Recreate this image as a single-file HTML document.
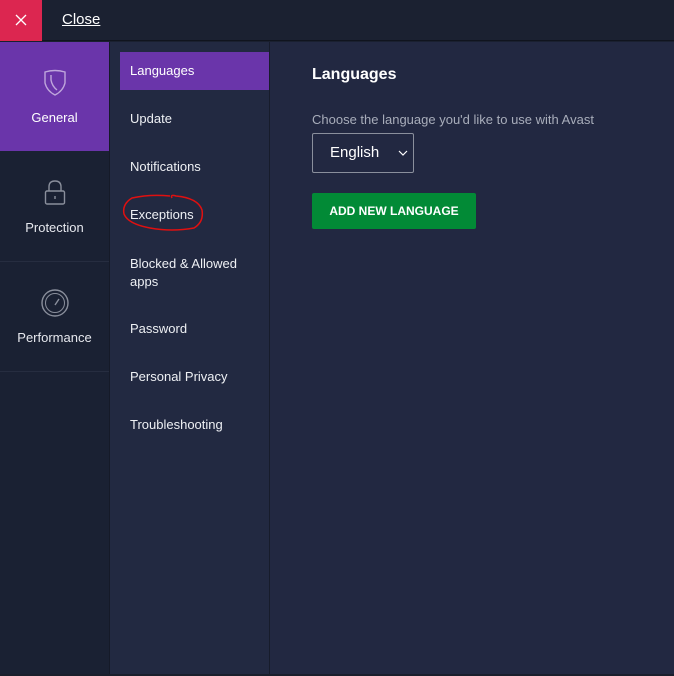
<!DOCTYPE html>
<html><head><style>
*{margin:0;padding:0;box-sizing:border-box}
body{width:674px;height:676px;background:#1a2030;font-family:"Liberation Sans",sans-serif;position:relative;overflow:hidden;color:#fff}
.abs{position:absolute}
</style></head><body>
<div class="abs" style="left:0;top:0;width:674px;height:41px;background:#1b2131;border-bottom:1px solid #10141e"></div>
<div class="abs" style="left:0;top:0;width:42px;height:41px;background:#dc2650"></div>
<svg class="abs" style="left:15px;top:14px" width="12" height="12"><path d="M1 1L11 11M11 1L1 11" stroke="#fff" stroke-width="1.3"/></svg>
<div class="abs" style="left:62px;top:11px;font-size:15px;text-decoration:underline;color:#fff">Close</div>

<div class="abs" style="left:0;top:42px;width:109px;height:632px;background:#1a2133"></div>
<div class="abs" style="left:0;top:42px;width:109px;height:109px;background:#6a35aa"></div>
<svg class="abs" style="left:43px;top:69px" width="24" height="28"><path d="M2 3Q12 0 22 3V14Q20 22 12 26Q4 22 2 14Z" fill="none" stroke="#bfa6dc" stroke-width="1.4"/><path d="M8 6V11Q9 17 14 21" fill="none" stroke="#bfa6dc" stroke-width="1.4"/></svg>
<div class="abs" style="left:0;top:110px;width:109px;text-align:center;font-size:13px">General</div>
<svg class="abs" style="left:44px;top:180px" width="22" height="26"><path d="M5 11V7Q5 1 11 1Q17 1 17 7V11" fill="none" stroke="#8a8f9c" stroke-width="1.4"/><rect x="1.5" y="11" width="19" height="13" rx="1.5" fill="none" stroke="#8a8f9c" stroke-width="1.4"/><path d="M11 16V19" stroke="#8a8f9c" stroke-width="1.4"/></svg>
<div class="abs" style="left:0;top:220px;width:109px;text-align:center;font-size:13px;color:#e6e8ee">Protection</div>
<div class="abs" style="left:0;top:261px;width:109px;height:1px;background:#262d40"></div>
<svg class="abs" style="left:40px;top:288px" width="30" height="30"><circle cx="15" cy="15" r="13" fill="none" stroke="#8a8f9c" stroke-width="1.4"/><circle cx="15" cy="15" r="9.5" fill="none" stroke="#8a8f9c" stroke-width="1"/><path d="M15 17L19 11" stroke="#8a8f9c" stroke-width="1.4"/></svg>
<div class="abs" style="left:0;top:330px;width:109px;text-align:center;font-size:13px;color:#e6e8ee">Performance</div>
<div class="abs" style="left:0;top:371px;width:109px;height:1px;background:#262d40"></div>
<div class="abs" style="left:109px;top:42px;width:1px;height:632px;background:#151a28"></div>

<div class="abs" style="left:110px;top:42px;width:159px;height:632px;background:#222941"></div>
<div class="abs" style="left:269px;top:42px;width:1px;height:632px;background:#171c2b"></div>
<div class="abs" style="left:270px;top:42px;width:404px;height:632px;background:#222841"></div>
<div class="abs" style="left:120px;top:52px;width:149px;height:38px;background:#6a35aa"></div>
<div class="abs" style="left:130px;top:63px;font-size:13px;color:#fff;line-height:16px">Languages</div>
<div class="abs" style="left:130px;top:111px;font-size:13px;color:#eef0f4;line-height:16px">Update</div>
<div class="abs" style="left:130px;top:159px;font-size:13px;color:#eef0f4;line-height:16px">Notifications</div>
<div class="abs" style="left:130px;top:207px;font-size:13px;color:#eef0f4;line-height:16px">Exceptions</div>
<svg class="abs" style="left:120px;top:192px" width="86" height="44"><path d="M50 4Q30 2 12 6Q2 12 4 22Q8 32 30 36Q52 40 74 36Q84 30 82 18Q78 6 56 4Q50 2 52 6" fill="none" stroke="#e01010" stroke-width="1.5"/></svg>
<div class="abs" style="left:130px;top:255px;font-size:13px;color:#eef0f4;line-height:18px">Blocked &amp; Allowed<br>apps</div>
<div class="abs" style="left:130px;top:321px;font-size:13px;color:#eef0f4;line-height:16px">Password</div>
<div class="abs" style="left:130px;top:369px;font-size:13px;color:#eef0f4;line-height:16px">Personal Privacy</div>
<div class="abs" style="left:130px;top:417px;font-size:13px;color:#eef0f4;line-height:16px">Troubleshooting</div>

<div class="abs" style="left:312px;top:66px;font-size:16px;font-weight:bold">Languages</div>
<div class="abs" style="left:312px;top:112px;font-size:13px;color:#a8adba">Choose the language you'd like to use with Avast</div>
<div class="abs" style="left:312px;top:133px;width:102px;height:40px;border:1px solid #8a8f9c;border-radius:2px"></div>
<div class="abs" style="left:330px;top:144px;font-size:15px">English</div>
<svg class="abs" style="left:398px;top:150px" width="10" height="6"><path d="M1 1L5 5L9 1" fill="none" stroke="#fff" stroke-width="1.2"/></svg>
<div class="abs" style="left:312px;top:193px;width:164px;height:36px;background:#028a36;border-radius:2px;font-size:12px;font-weight:bold;text-align:center;line-height:36px">ADD NEW LANGUAGE</div>
<div class="abs" style="left:0;top:674px;width:674px;height:2px;background:#1a1f2c"></div>
</body></html>
